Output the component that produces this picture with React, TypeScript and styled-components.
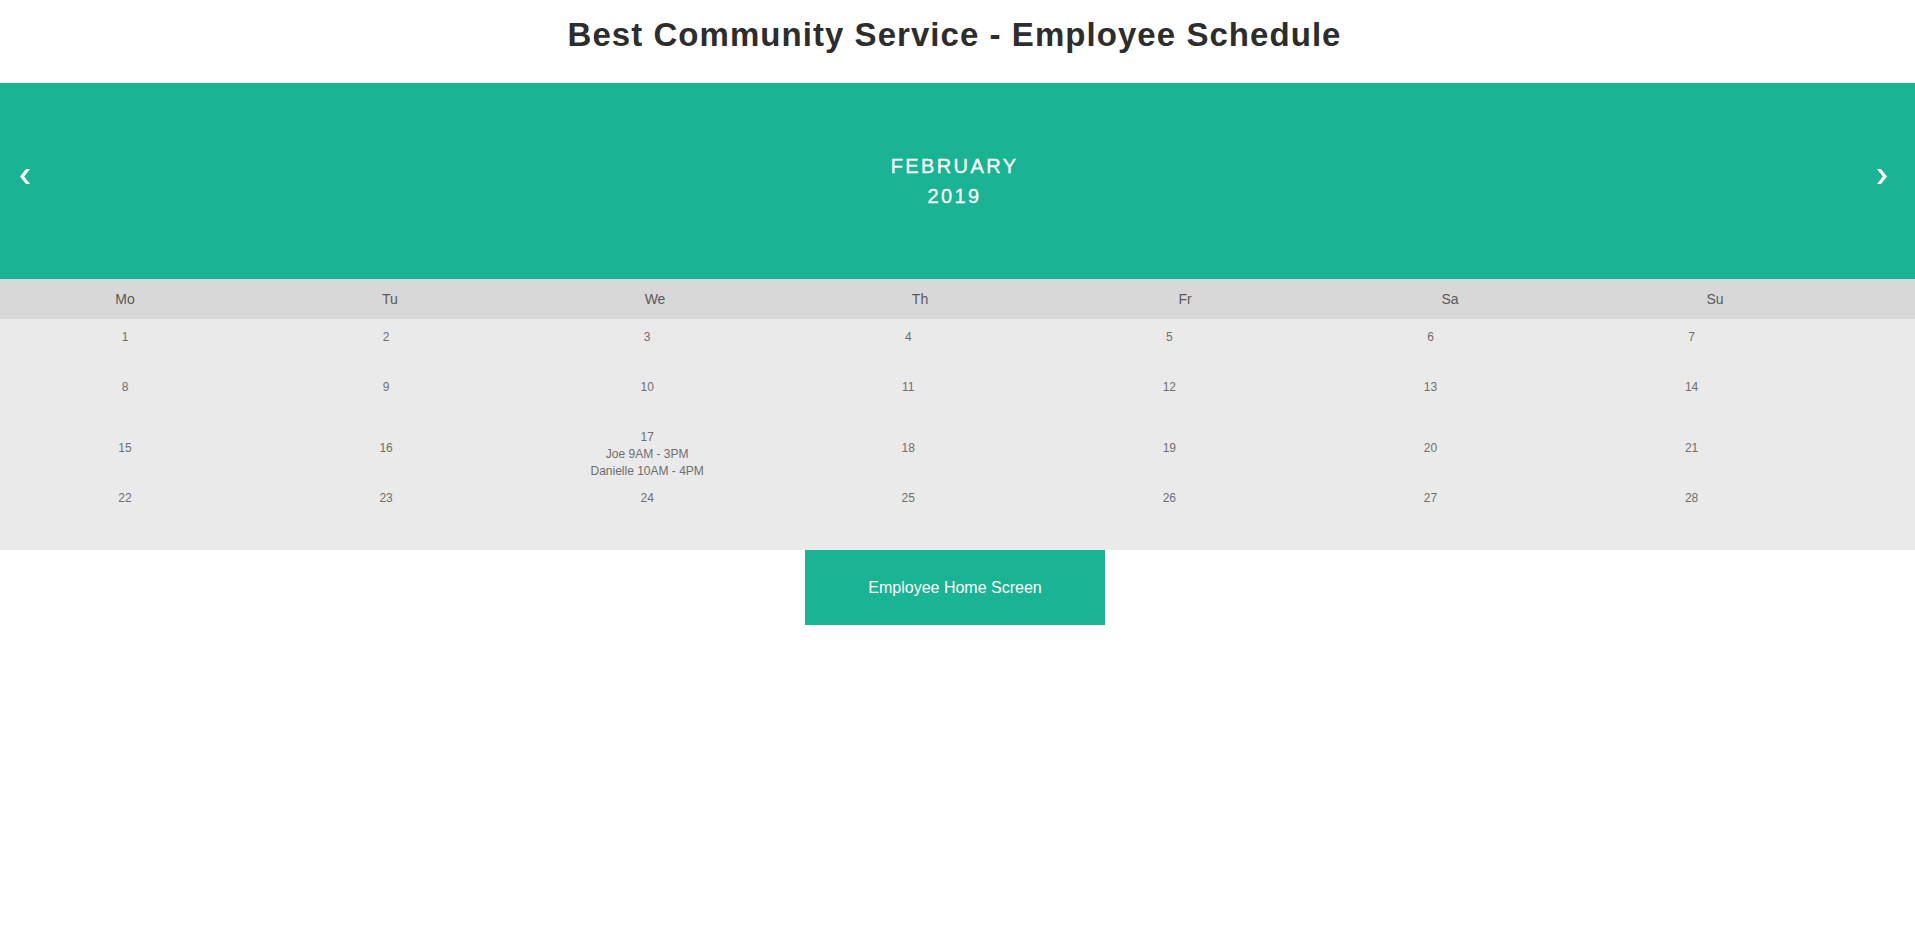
import React from 'react'
import styled, { createGlobalStyle } from 'styled-components'

const GlobalStyle = createGlobalStyle`
  *{
    box-sizing:border-box;
  }
  body{
    margin:0;
    background:#fff;
    font-family:"Liberation Sans", Arial, Helvetica, sans-serif;
  }
`;

const weekdays = ['Mo', 'Tu', 'We', 'Th', 'Fr', 'Sa', 'Su']

const shifts: Record<number, string[]> = {
  17: ['Joe 9AM - 3PM', 'Danielle 10AM - 4PM'],
}

const weeks = [0, 1, 2, 3].map(w => [1, 2, 3, 4, 5, 6, 7].map(d => w * 7 + d))

const Arrow = ({ dir }: { dir: 'prev' | 'next' }) => (
  <ArrowIcon width="10" height="15" viewBox="0 0 10 15">
    {dir === 'prev'
      ? <path d="M10 0 L4.2 7.5 L10 15 H6 L0 7.5 L6 0 Z" fill="#fff" />
      : <path d="M0 0 L5.8 7.5 L0 15 H4 L10 7.5 L4 0 Z" fill="#fff" />}
  </ArrowIcon>
)

const App = () => {
  return (
    <Page>
      <GlobalStyle />
      <Title>Best Community Service - Employee Schedule</Title>
      <MonthBar>
        <Arrow dir="prev" />
        <MonthLabel>
          <span>February</span>
          <span>2019</span>
        </MonthLabel>
        <Arrow dir="next" />
      </MonthBar>
      <Weekdays>
        {weekdays.map(d => <Weekday key={d}>{d}</Weekday>)}
      </Weekdays>
      <Days>
        {weeks.map((week, i) => (
          <Week key={i} $shifted={week.some(d => shifts[d])}>
            {week.map(d => (
              <Day key={d} $hasNotes={!!shifts[d]}>
                <div>{d}</div>
                {(shifts[d] || []).map(s => <div key={s}>{s}</div>)}
              </Day>
            ))}
          </Week>
        ))}
      </Days>
      <ButtonRow>
        <HomeButton>Employee Home Screen</HomeButton>
      </ButtonRow>
    </Page>
  )
}

export default App

const Page = styled.div`
  width:100%;
  min-height:928px;
`;

const Title = styled.h1`
  margin:16px 0 30px;
  padding-right:6px;
  font-size:33px;
  line-height:37px;
  letter-spacing:1.05px;
  font-weight:bold;
  color:#2d2d2d;
  text-align:center;
`;

const MonthBar = styled.div`
  display:flex;
  align-items:center;
  height:196px;
  padding:0 28px 0 20px;
  background-color:#1ab393;
`;

const ArrowIcon = styled.svg`
  display:block;
  flex:none;
  margin-bottom:9px;
`;

const MonthLabel = styled.div`
  flex:1;
  display:flex;
  flex-direction:column;
  align-items:center;
  padding:1px 0 0 2px;
  color:#fff;
  font-size:20px;
  line-height:29.5px;
  letter-spacing:2.4px;
  text-transform:uppercase;
  -webkit-text-stroke:0.3px #fff;
`;

const Weekdays = styled.div`
  display:grid;
  grid-template-columns:repeat(7, 250px);
  column-gap:15px;
  align-items:center;
  height:40px;
  background-color:#d8d8d8;
`;

const Weekday = styled.div`
  text-align:center;
  font-size:14px;
  color:#595959;
`;

const Days = styled.div`
  padding:9.5px 0 10.5px;
  background-color:#eaeaea;
`;

const Week = styled.div<{ $shifted: boolean }>`
  display:grid;
  grid-template-columns:repeat(7, 250px);
  column-gap:11.1px;
  align-items:start;
  height:${p => (p.$shifted ? 61 : 50)}px;
  padding-top:${p => (p.$shifted ? 11 : 0)}px;
`;

const Day = styled.div<{ $hasNotes: boolean }>`
  text-align:center;
  font-size:12px;
  line-height:17px;
  color:#6e6e6e;
  margin-top:${p => (p.$hasNotes ? -11 : 0)}px;
`;

const ButtonRow = styled.div`
  display:flex;
  justify-content:center;
  padding-right:5px;
`;

const HomeButton = styled.button`
  width:300px;
  height:75px;
  padding-top:2px;
  border:none;
  background-color:#1ab393;
  color:#fff;
  font-family:"Liberation Sans", Arial, Helvetica, sans-serif;
  font-size:16px;
  cursor:pointer;
`;
